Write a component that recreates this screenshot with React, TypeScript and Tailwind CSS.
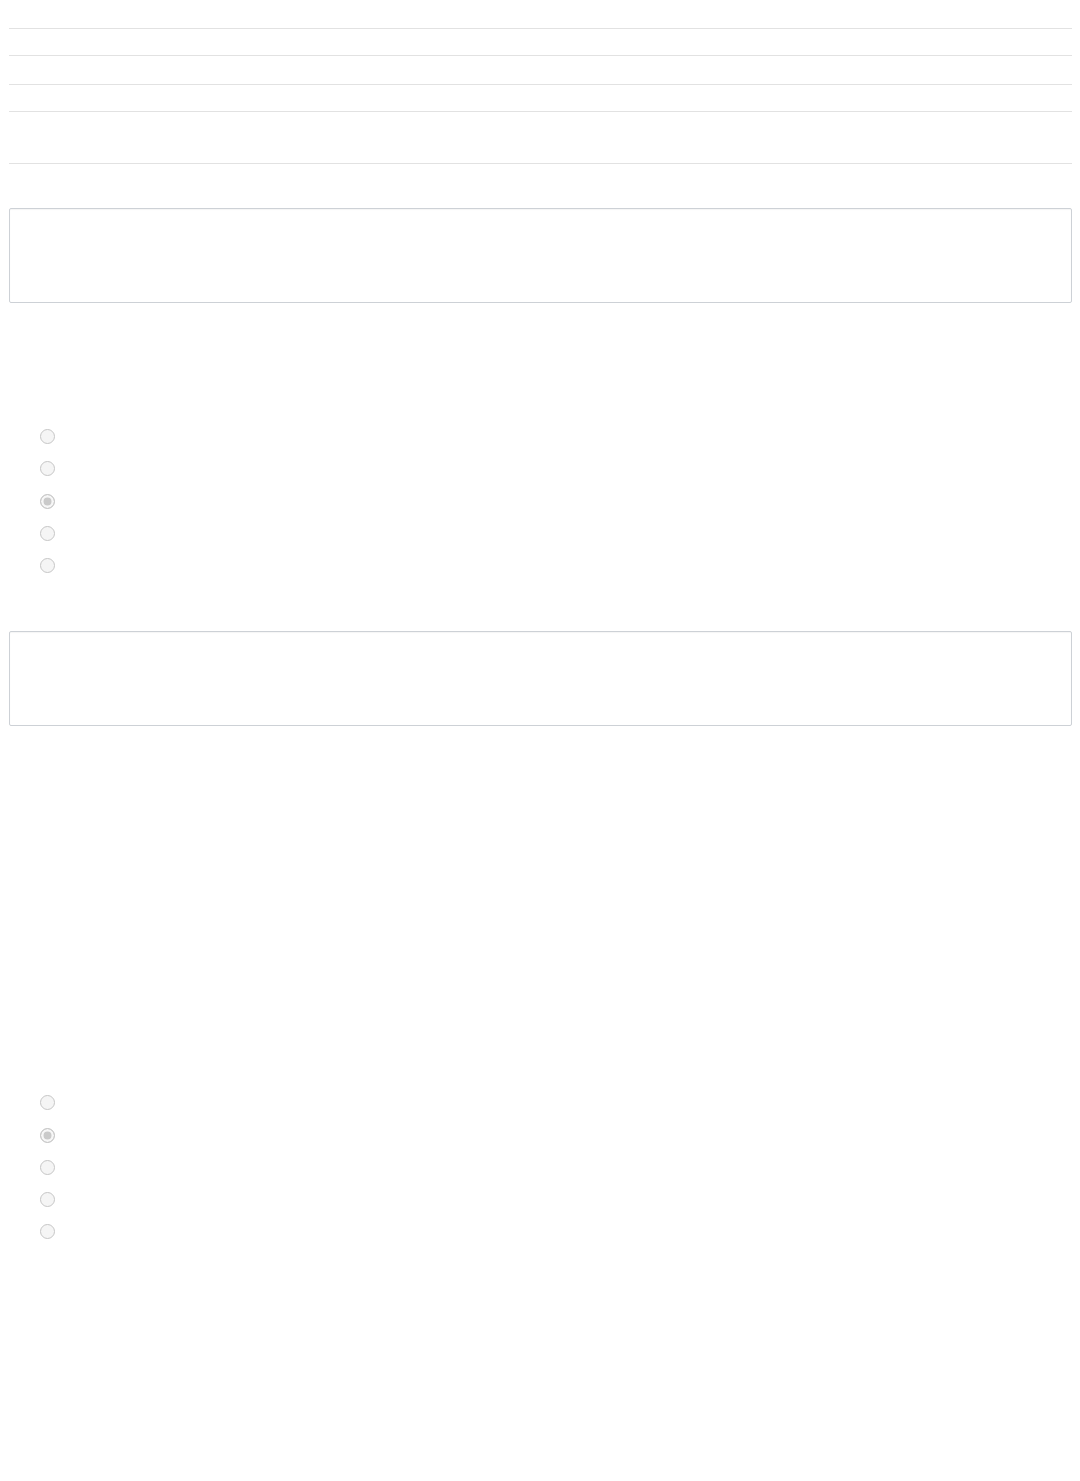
import React from 'react';

const listRows = [27, 29, 27, 52];

const RadioGroup = ({ name, checked }: { name: string; checked: number }) => (
  <div className="flex flex-col">
    {[0, 1, 2, 3, 4].map((i) => (
      <label key={i} className="flex h-[32.25px] items-center pl-[30.5px] pt-px">
        <input
          type="radio"
          name={name}
          disabled
          defaultChecked={i === checked}
          className="m-0 h-[15px] w-[15px] appearance-none rounded-full border border-[#c6c6c6] bg-[#f5f5f5] checked:bg-[#cacaca] checked:shadow-[inset_0_0_0_2.5px_#f7f7f7]"
        />
      </label>
    ))}
  </div>
);

const Box = () => (
  <textarea
    disabled
    className="block h-[95px] w-full resize-none rounded-[2px] border border-[#cdd1d6] bg-white shadow-[inset_0_1px_1px_rgba(0,0,0,0.04)]"
  />
);

export default function App() {
  return (
    <div className="min-h-[1481px] bg-white pl-[9px] pr-[8px] font-['Liberation_Sans',sans-serif]">
      {/* list of empty rows */}
      <div className="pt-[28px]">
        {listRows.map((h, i) => (
          <div key={i} className="border-t border-[#e2e2e2]" style={{ height: h }} />
        ))}
        <div className="border-t border-[#e2e2e2]" />
      </div>

      <div className="mt-[44px]">
        <Box />
      </div>

      <div className="mt-[117px]">
        <RadioGroup name="q1" checked={2} />
      </div>

      <div className="mt-[50px]">
        <Box />
      </div>

      <div className="mt-[360px]">
        <RadioGroup name="q2" checked={1} />
      </div>
    </div>
  );
}
